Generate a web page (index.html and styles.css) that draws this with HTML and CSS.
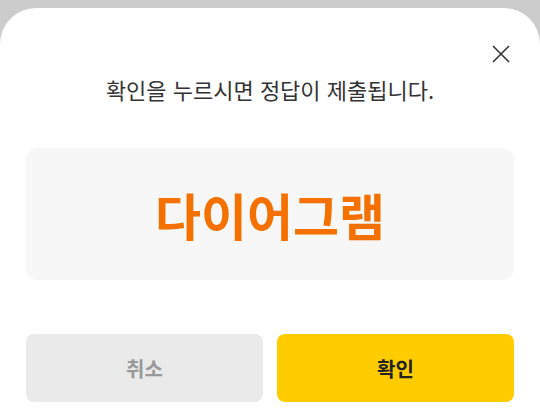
FILE: index.html
```html
<!DOCTYPE html>
<html lang="ko">
<head>
    <meta charset="UTF-8">
    <title>정답 제출</title>
    <link rel="stylesheet" href="styles.css">
</head>
<body>
    <div class="sheet">
        <div class="sheet-top">
            <button class="close-btn" aria-label="닫기">
                <svg width="20" height="20" viewBox="0 0 20 20">
                    <path d="M2 2 L18 18 M18 2 L2 18" stroke="#333" stroke-width="1.6" fill="none"/>
                </svg>
            </button>
        </div>
        <p class="message">확인을 누르시면 정답이 제출됩니다.</p>
        <div class="answer-box">
            <span class="answer">다이어그램</span>
        </div>
        <div class="actions">
            <button class="btn btn-cancel">취소</button>
            <button class="btn btn-confirm">확인</button>
        </div>
    </div>
</body>
</html>
```

FILE: styles.css
```css
* {
    margin: 0;
    padding: 0;
    box-sizing: border-box;
    font-family: 'Noto Sans CJK KR', 'Noto Sans', sans-serif;
}
body {
    background-color: #cccccc;
    height: 409px;
    overflow: hidden;
    padding-top: 8px;
}
/* Bottom sheet */
.sheet {
    background-color: #ffffff;
    border-radius: 36px 36px 0 0;
    height: 401px;
    padding: 0 26px 0 26px;
}
.sheet-top {
    display: flex;
    justify-content: flex-end;
    padding-top: 36px;
    height: 64px;
}
.close-btn {
    background: none;
    border: none;
    width: 20px;
    height: 20px;
    margin-right: 3px;
    cursor: pointer;
}
.close-btn svg {
    display: block;
}
.message {
    text-align: center;
    font-size: 22px;
    color: #333333;
    line-height: 32px;
    margin-top: 1px;
}
/* Answer */
.answer-box {
    margin-top: 43px;
    height: 132px;
    background-color: #f7f7f7;
    border-radius: 12px;
    display: flex;
    align-items: center;
    justify-content: center;
}
.answer {
    font-size: 50px;
    font-weight: 700;
    color: #f47100;
}
/* Buttons */
.actions {
    display: flex;
    gap: 14px;
    margin-top: 54px;
}
.btn {
    flex: 1;
    height: 68px;
    border: none;
    border-radius: 8px;
    font-size: 20px;
    font-weight: 700;
    cursor: pointer;
}
.btn-cancel {
    background-color: #eaeaea;
    color: #999999;
}
.btn-confirm {
    background-color: #ffcc00;
    color: #222222;
}
```
